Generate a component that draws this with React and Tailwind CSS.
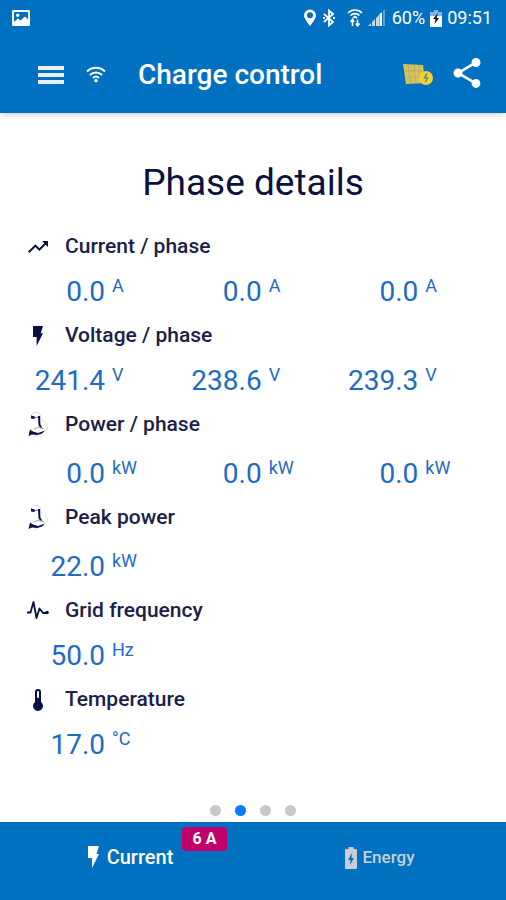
import { MdShare, MdTrendingUp } from "react-icons/md";

function PowerIcon() {
  return (
    <svg viewBox="0 0 24 28" className="h-7 w-6" fill="none">
      <path d="M5 5 C6 1 11 0 14 3 L15 8 C19 11 23 15 21 18 C18 22 12 24 8 26" stroke="#d5d8e0" strokeWidth="1" />
      <path d="M5 4.5 L9 5.5 L8.5 8 L5 7.5z" fill="#0a1040" />
      <path d="M8 7 L13 6" stroke="#6b7090" strokeWidth="1" />
      <path d="M13 5 L13.5 14 L15.5 17" stroke="#0a1040" strokeWidth="2" />
      <path d="M8 18 L13 16 L18 18" stroke="#9a9fb5" strokeWidth="1" />
      <path d="M4 18.5 L7 20.5 L12 22 L19 19.5 L16 22.5 L11 24 L6 23.5 L2.5 25z" fill="#0a1040" />
    </svg>
  );
}

function BoltIcon({ className }) {
  return (
    <svg viewBox="0 0 11 22" className={className} fill="currentColor">
      <path d="M0 0 H11 L8.5 8 H11 L4 22 V12 H0z" />
    </svg>
  );
}

function PulseIcon() {
  return (
    <svg viewBox="0 0 24 24" className="h-6 w-6" fill="none" stroke="currentColor" strokeWidth="1.8" strokeLinejoin="round">
      <path d="M1 13.5 H4.5 L7.5 3 L10.5 19 L13.5 9.5 L17 14 H21" />
      <circle cx="21" cy="13.5" r="1.8" fill="currentColor" stroke="none" />
    </svg>
  );
}

function ThermometerIcon() {
  return (
    <svg viewBox="0 0 24 24" className="h-6 w-6">
      <path d="M9 4 a3 3 0 0 1 6 0 V14 a5 5 0 1 1 -6 0z" fill="currentColor" />
      <path d="M12 4 V9" stroke="#fff" strokeWidth="2" strokeLinecap="round" />
    </svg>
  );
}

function BatteryIcon({ className, bolt }) {
  return (
    <svg viewBox="0 0 12 22" className={className}>
      <path d="M3.5 0 h5 v2 H11 a1 1 0 0 1 1 1 V21 a1 1 0 0 1 -1 1 H1 a1 1 0 0 1 -1 -1 V3 a1 1 0 0 1 1 -1 h2.5z" fill="currentColor" />
      <path d="M7 6 L3 13 H5.5 L5 18 L9 11 H6.5z" fill={bolt} />
    </svg>
  );
}

function StatusBatteryIcon() {
  return (
    <svg viewBox="0 0 12 17" className="mx-[5px] h-[17px] w-3">
      <path d="M4 0 H8 V2 H12 V8 H0 V2 H4z" fill="#7fb7e0" />
      <rect y="6" width="12" height="11" fill="#fff" />
      <path d="M8 3 L3 9 H5.5 L4.5 14 L9 8 H6.5z" fill="#111" />
    </svg>
  );
}

function WifiIcon({ className }) {
  return (
    <svg viewBox="0 0 20 17" className={className} fill="none" stroke="currentColor" strokeWidth="2">
      <path d="M1 5.5 C6 0.5 14 0.5 19 5.5" />
      <path d="M4 9 C7.5 5.5 12.5 5.5 16 9" />
      <path d="M7 12 C9 10 11 10 13 12" />
      <circle cx="10" cy="14.8" r="1.8" fill="currentColor" stroke="none" />
    </svg>
  );
}

function SolarIcon() {
  return (
    <svg viewBox="0 0 30 21" className="h-[21px] w-[30px]">
      <path d="M0 0 L20 1 L22 19 L3 20z" fill="#d9c255" />
      <path d="M5 1 L8 20 M11 1 L13 19 M16 1 L17 19 M1 7 H21 M2 13 H20" stroke="#b5ae6c" strokeWidth="1" />
      <circle cx="23" cy="14" r="7" fill="#f2d22e" />
      <path d="M24 9.5 L21.5 14 H24.5 L22.5 18" fill="none" stroke="#5f8f8a" strokeWidth="1.6" />
    </svg>
  );
}

function StatusBar() {
  return (
    <div className="flex h-9 items-center justify-between pr-[14px] pl-3">
      <svg viewBox="0 0 18 16" className="h-4 w-[18px]">
        <rect x="1" y="1" width="16" height="14" rx="0.5" fill="none" stroke="#fff" strokeWidth="2" />
        <circle cx="5.7" cy="5.2" r="1.7" fill="#fff" />
        <path d="M2 14 V12 L6 8.5 L8.5 10.5 L13 6.5 L16 9.5 V14z" fill="#fff" />
      </svg>
      <div className="flex items-center text-lg text-white">
        <svg viewBox="0 0 14 18" className="h-[18px] w-[14px]">
          <path d="M7 0.5 a6 6 0 0 1 6 6 C13 10 7 17 7 17 S1 10 1 6.5 a6 6 0 0 1 6 -6z" fill="#fff" />
          <circle cx="7" cy="6.3" r="3" fill="#0070c0" />
        </svg>
        <svg viewBox="0 0 12 18" className="ml-[6px] h-[18px] w-3" fill="none" stroke="#fff" strokeWidth="1.8">
          <path d="M1 5 L10 13 L6 16.5 V1.5 L10 5 L1 13" />
          <path d="M0 9 H2 M10 9 H12" />
        </svg>
        <svg viewBox="0 0 16 18" className="ml-3 h-[18px] w-4" fill="none" stroke="#fff" strokeWidth="1.6">
          <path d="M1 4 C5 0 11 0 15 4 M3.5 6.5 C6 4 10 4 12.5 6.5 M6 9 L8 7.5 L10 9" />
          <path d="M5.5 17 V11 M3.5 13 L5.5 10.5 L7 13 M10.5 10.5 V17 M9 14.5 L10.5 17 L12.5 14.5" />
        </svg>
        <svg viewBox="0 0 18 18" className="ml-[5px] h-[18px] w-[18px]" fill="#fff">
          <path d="M0 17 L3 14 V17z M4 17 V13 L7 10 V17z M8 17 V9 L11 6 V17z" opacity="0.75" />
          <path d="M11.5 17 V5 L14 3 V17z" />
          <path d="M15 17 V2 L17 0 V17z" opacity="0.35" />
        </svg>
        <span className="ml-[6px]">60%</span>
        <StatusBatteryIcon />
        <span>09:51</span>
      </div>
    </div>
  );
}

const sections = [
  { label: "Current / phase", unit: "A", values: ["0.0", "0.0", "0.0"], icon: <MdTrendingUp className="h-6 w-6" /> },
  { label: "Voltage / phase", unit: "V", values: ["241.4", "238.6", "239.3"], icon: <BoltIcon className="h-5 w-[10px]" /> },
  { label: "Power / phase", unit: "kW", values: ["0.0", "0.0", "0.0"], icon: <PowerIcon /> },
  { label: "Peak power", unit: "kW", values: ["22.0"], icon: <PowerIcon /> },
  { label: "Grid frequency", unit: "Hz", values: ["50.0"], icon: <PulseIcon /> },
  { label: "Temperature", unit: "°C", values: ["17.0"], icon: <ThermometerIcon /> },
];

function Section({ label, unit, values, icon }) {
  return (
    <section>
      <h2 className="flex h-9 items-center text-[21px] font-medium text-[#1b2048]">
        <span className="mr-[15px] ml-2 flex w-6 justify-center text-[#0a1040]">{icon}</span>
        {label}
      </h2>
      <div className={unit === "kW" ? "grid grid-cols-3 pt-1" : "grid grid-cols-3"}>
        {values.map((value, i) => (
          <p key={i} className="flex h-[53px] items-center text-[#1f6bc4]">
            <span className="w-[87px] text-right text-[28px]">{value}</span>
            <span className="ml-[7px] pb-3 text-lg">{unit}</span>
          </p>
        ))}
      </div>
    </section>
  );
}

export default function App() {
  return (
    <div className="flex min-h-screen flex-col bg-white font-['Roboto',sans-serif]">
      <header className="bg-[#0070c0] shadow-md">
        <StatusBar />
        <div className="flex h-[77px] items-center pr-[21px] pl-[38px] text-white">
          <button aria-label="Menu" className="flex w-[26px] flex-col gap-[3px]">
            <span className="h-1 bg-[#e8effa]" />
            <span className="h-1 bg-[#e8effa]" />
            <span className="h-1 bg-[#e8effa]" />
          </button>
          <WifiIcon className="ml-[22px] h-[17px] w-5" />
          <h1 className="ml-8 text-[28px] font-medium">Charge control</h1>
          <div className="ml-auto flex items-center gap-4">
            <SolarIcon />
            <button aria-label="Share" className="pb-1">
              <MdShare className="h-9 w-9" />
            </button>
          </div>
        </div>
      </header>

      <main className="flex-1 px-[18px]">
        <h1 className="flex h-[116px] items-center justify-center pt-6 text-[37px] text-[#0a1040]">
          Phase details
        </h1>
        {sections.map((s) => (
          <Section key={s.label} {...s} />
        ))}
      </main>

      <div className="flex justify-center gap-[14px] pb-[6px]">
        <span className="h-[11px] w-[11px] rounded-full bg-[#c8c8c8]" />
        <span className="h-[11px] w-[11px] rounded-full bg-[#0a78ff]" />
        <span className="h-[11px] w-[11px] rounded-full bg-[#c8c8c8]" />
        <span className="h-[11px] w-[11px] rounded-full bg-[#c8c8c8]" />
      </div>

      <nav className="grid h-[78px] grid-cols-2 bg-[#0070c0] font-medium">
        <button className="relative flex items-center justify-center pb-2 pl-2 text-xl text-white">
          <BoltIcon className="mr-2 h-[22px] w-[11px]" />
          Current
          <span className="absolute top-[5px] right-[26px] flex h-6 w-[45px] items-center justify-center rounded bg-[#c2006b] text-base font-bold">
            6 A
          </span>
        </button>
        <button className="flex items-center justify-center pb-[6px] text-[17px] text-[#c9ced6]">
          <BatteryIcon className="mr-[6px] h-[22px] w-3" bolt="#0070c0" />
          Energy
        </button>
      </nav>
    </div>
  );
}
